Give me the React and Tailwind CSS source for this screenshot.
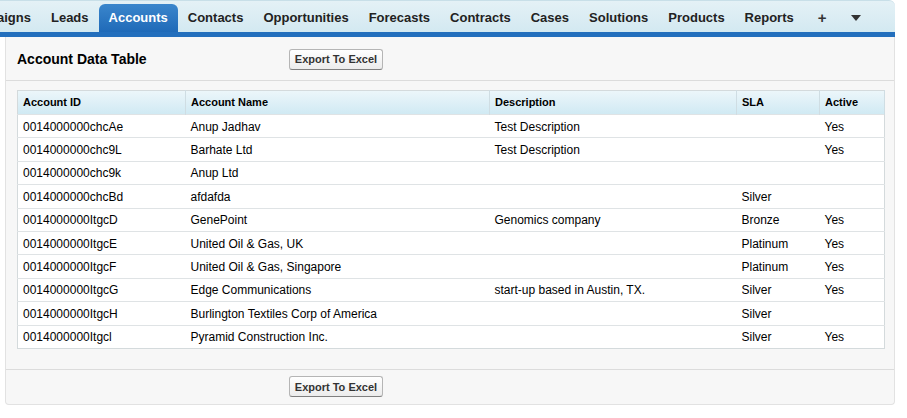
const tabs = ['aigns', 'Leads', 'Accounts', 'Contacts', 'Opportunities', 'Forecasts', 'Contracts', 'Cases', 'Solutions', 'Products', 'Reports'];

const rows = [
  ['0014000000chcAe', 'Anup Jadhav', 'Test Description', '', 'Yes'],
  ['0014000000chc9L', 'Barhate Ltd', 'Test Description', '', 'Yes'],
  ['0014000000chc9k', 'Anup Ltd', '', '', ''],
  ['0014000000chcBd', 'afdafda', '', 'Silver', ''],
  ['0014000000ItgcD', 'GenePoint', 'Genomics company', 'Bronze', 'Yes'],
  ['0014000000ItgcE', 'United Oil & Gas, UK', '', 'Platinum', 'Yes'],
  ['0014000000ItgcF', 'United Oil & Gas, Singapore', '', 'Platinum', 'Yes'],
  ['0014000000ItgcG', 'Edge Communications', 'start-up based in Austin, TX.', 'Silver', 'Yes'],
  ['0014000000ItgcH', 'Burlington Textiles Corp of America', '', 'Silver', ''],
  ['0014000000Itgcl', 'Pyramid Construction Inc.', '', 'Silver', 'Yes'],
];

const cols = [
  { name: 'Account ID', w: 'w-[168px]' },
  { name: 'Account Name', w: 'w-[304px]' },
  { name: 'Description', w: 'w-[247px]' },
  { name: 'SLA', w: 'w-[83px]' },
  { name: 'Active', w: '' },
];

function ExportButton() {
  return (
    <button className="h-[21px] w-[94px] rounded-[3px] border border-[#b5b5b5] border-b-[#7f7f7f] bg-gradient-to-b from-white to-[#ececec] text-[11px] font-bold text-[#333]">
      Export To Excel
    </button>
  );
}

export default function App() {
  return (
    <div className="w-[907px] h-[418px] bg-white font-['Liberation_Sans',Arial,sans-serif] text-[#000] overflow-hidden">
      <div className="w-[895px]">
        <div className="h-[32px] flex items-end rounded-tr-[6px] bg-gradient-to-b from-[#e4f1f6] to-[#d3e9f1] border-t border-[#c8dfe8] overflow-hidden">
          {tabs.map((t, i) => {
            const active = t === 'Accounts';
            return (
              <div
                key={t}
                className={`h-[28px] flex items-center text-[13px] font-bold px-[10px] ${i === 0 ? '-ml-[13px]' : ''} ${active ? 'bg-gradient-to-b from-[#3a86cc] to-[#1f6ab8] text-white rounded-t-[6px]' : 'text-[#222]'}`}
              >
                {t}
              </div>
            );
          })}
          <div className="h-[28px] flex items-center pl-[14px] pr-[12px] text-[15px] font-bold text-[#333]">+</div>
          <div className="h-[28px] flex items-center px-[12px]">
            <svg width="10" height="6" viewBox="0 0 10 6"><path d="M0 0h10L5 6z" fill="#333" /></svg>
          </div>
        </div>
        <div className="h-[5px] bg-[#236fbd]" />
        <div className="ml-[5px] bg-[#f7f7f7] border border-t-0 border-[#e2e2e2] rounded-b-[4px]">
          <div className="h-[44px] flex items-center pt-[1px] border-b border-[#dcdcdc]">
            <div className="pl-[11px] w-[283px] text-[14px] font-bold">Account Data Table</div>
            <ExportButton />
          </div>
          <div className="px-[11px] pt-[9px] pb-[20px]">
            <table className="w-[868px] border-collapse bg-white text-[12px] border border-[#d4dadc]">
              <thead>
                <tr className="h-[24px] bg-gradient-to-b from-[#ecf6fa] to-[#cfe9f3]">
                  {cols.map((c) => (
                    <th key={c.name} className={`${c.w} text-left font-bold text-[11px] px-[5px] border-r border-[#cfdde3] text-[#000]`}>
                      {c.name}
                    </th>
                  ))}
                </tr>
              </thead>
              <tbody>
                {rows.map((r) => (
                  <tr key={r[0]} className="h-[23.4px] border-t border-[#dfe3e5]">
                    {r.map((v, j) => (
                      <td key={j} className="px-[5px] pt-[1px] pb-0 leading-[14px]">{v}</td>
                    ))}
                  </tr>
                ))}
              </tbody>
            </table>
          </div>
          <div className="h-[35px] flex items-center border-t border-[#dcdcdc]">
            <div className="w-[283px]" />
            <ExportButton />
          </div>
        </div>
      </div>
    </div>
  );
}
